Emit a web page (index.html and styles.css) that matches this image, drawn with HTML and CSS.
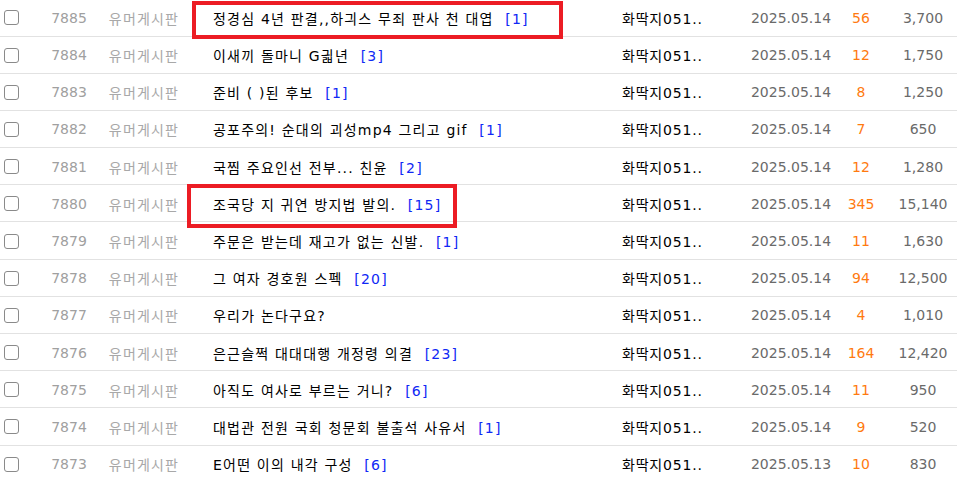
FILE: index.html
```html
<!DOCTYPE html>
<html lang="ko">
<head>
<meta charset="utf-8">
<title>유머게시판</title>
<link rel="stylesheet" href="styles.css">
</head>
<body>
<div class="board">
  <div class="row"><span class="chk"></span><span class="num">7885</span><span class="cat">유머게시판</span><span class="title">정경심 4년 판결,,하긔스 무죄 판사 천 대엽 <em>[1]</em></span><span class="author">화딱지051..</span><span class="date">2025.05.14</span><span class="cmt">56</span><span class="views">3,700</span></div>
  <div class="row"><span class="chk"></span><span class="num">7884</span><span class="cat">유머게시판</span><span class="title">이새끼 돌마니 G긟년 <em>[3]</em></span><span class="author">화딱지051..</span><span class="date">2025.05.14</span><span class="cmt">12</span><span class="views">1,750</span></div>
  <div class="row"><span class="chk"></span><span class="num">7883</span><span class="cat">유머게시판</span><span class="title">준비 ( )된 후보 <em>[1]</em></span><span class="author">화딱지051..</span><span class="date">2025.05.14</span><span class="cmt">8</span><span class="views">1,250</span></div>
  <div class="row"><span class="chk"></span><span class="num">7882</span><span class="cat">유머게시판</span><span class="title">공포주의! 순대의 괴성mp4 그리고 gif <em>[1]</em></span><span class="author">화딱지051..</span><span class="date">2025.05.14</span><span class="cmt">7</span><span class="views">650</span></div>
  <div class="row"><span class="chk"></span><span class="num">7881</span><span class="cat">유머게시판</span><span class="title">국찜 주요인선 전부... 친윤 <em>[2]</em></span><span class="author">화딱지051..</span><span class="date">2025.05.14</span><span class="cmt">12</span><span class="views">1,280</span></div>
  <div class="row"><span class="chk"></span><span class="num">7880</span><span class="cat">유머게시판</span><span class="title">조국당 지 귀연 방지법 발의. <em>[15]</em></span><span class="author">화딱지051..</span><span class="date">2025.05.14</span><span class="cmt">345</span><span class="views">15,140</span></div>
  <div class="row"><span class="chk"></span><span class="num">7879</span><span class="cat">유머게시판</span><span class="title">주문은 받는데 재고가 없는 신발. <em>[1]</em></span><span class="author">화딱지051..</span><span class="date">2025.05.14</span><span class="cmt">11</span><span class="views">1,630</span></div>
  <div class="row"><span class="chk"></span><span class="num">7878</span><span class="cat">유머게시판</span><span class="title">그 여자 경호원 스펙 <em>[20]</em></span><span class="author">화딱지051..</span><span class="date">2025.05.14</span><span class="cmt">94</span><span class="views">12,500</span></div>
  <div class="row"><span class="chk"></span><span class="num">7877</span><span class="cat">유머게시판</span><span class="title">우리가 논다구요?</span><span class="author">화딱지051..</span><span class="date">2025.05.14</span><span class="cmt">4</span><span class="views">1,010</span></div>
  <div class="row"><span class="chk"></span><span class="num">7876</span><span class="cat">유머게시판</span><span class="title">은근슬쩍 대대대행 개정령 의결 <em>[23]</em></span><span class="author">화딱지051..</span><span class="date">2025.05.14</span><span class="cmt">164</span><span class="views">12,420</span></div>
  <div class="row"><span class="chk"></span><span class="num">7875</span><span class="cat">유머게시판</span><span class="title">아직도 여사로 부르는 거니? <em>[6]</em></span><span class="author">화딱지051..</span><span class="date">2025.05.14</span><span class="cmt">11</span><span class="views">950</span></div>
  <div class="row"><span class="chk"></span><span class="num">7874</span><span class="cat">유머게시판</span><span class="title">대법관 전원 국회 청문회 불출석 사유서 <em>[1]</em></span><span class="author">화딱지051..</span><span class="date">2025.05.14</span><span class="cmt">9</span><span class="views">520</span></div>
  <div class="row"><span class="chk"></span><span class="num">7873</span><span class="cat">유머게시판</span><span class="title">E어떤 이의 내각 구성 <em>[6]</em></span><span class="author">화딱지051..</span><span class="date">2025.05.13</span><span class="cmt">10</span><span class="views">830</span></div>
</div>
<div class="mark mark-1"></div>
<div class="mark mark-2"></div>
</body>
</html>
```
FILE: styles.css
```css
html, body {
  margin: 0;
  padding: 0;
  background: #fff;
  overflow: hidden;
}
body {
  position: relative;
  width: 957px;
  height: 480px;
  font-family: "DejaVu Sans", "Noto Sans CJK KR", sans-serif;
  font-size: 14px;
  color: #000;
}
.board {
  margin-top: -0.7px;
}
.row {
  display: grid;
  grid-template-columns: 40px 58px 92px 420px 125px 112px 28px 82px;
  align-items: center;
  height: 37.2px;
  box-sizing: border-box;
  border-bottom: 1px solid #e2e2e2;
  padding-top: 1px;
  white-space: nowrap;
}
.chk {
  width: 13px;
  height: 13px;
  margin-left: 4px;
  border: 1.5px solid #8a8a8a;
  border-radius: 3px;
  background: #fff;
}
.num {
  text-align: center;
  color: #a0a0a0;
}
.cat {
  text-align: center;
  color: #a8a8a8;
  letter-spacing: 1.2px;
}
.title {
  padding-left: 23px;
  color: #000;
  overflow: hidden;
  letter-spacing: 1.2px;
}
.title em {
  font-style: normal;
  color: #1028f5;
  margin-left: 6px;
}
.author {
  padding-left: 12px;
  color: #000;
  letter-spacing: 0.8px;
}
.date {
  text-align: center;
  color: #6a6a6a;
}
.cmt {
  text-align: center;
  color: #ff7a10;
}
.views {
  text-align: center;
  padding-left: 14px;
  color: #6a6a6a;
}
.mark {
  position: absolute;
  box-sizing: border-box;
  border: 4.5px solid #ec1c24;
}
.mark-1 {
  left: 192px;
  top: 1px;
  width: 371px;
  height: 38px;
}
.mark-2 {
  left: 187px;
  top: 184px;
  width: 270px;
  height: 44px;
}
```
